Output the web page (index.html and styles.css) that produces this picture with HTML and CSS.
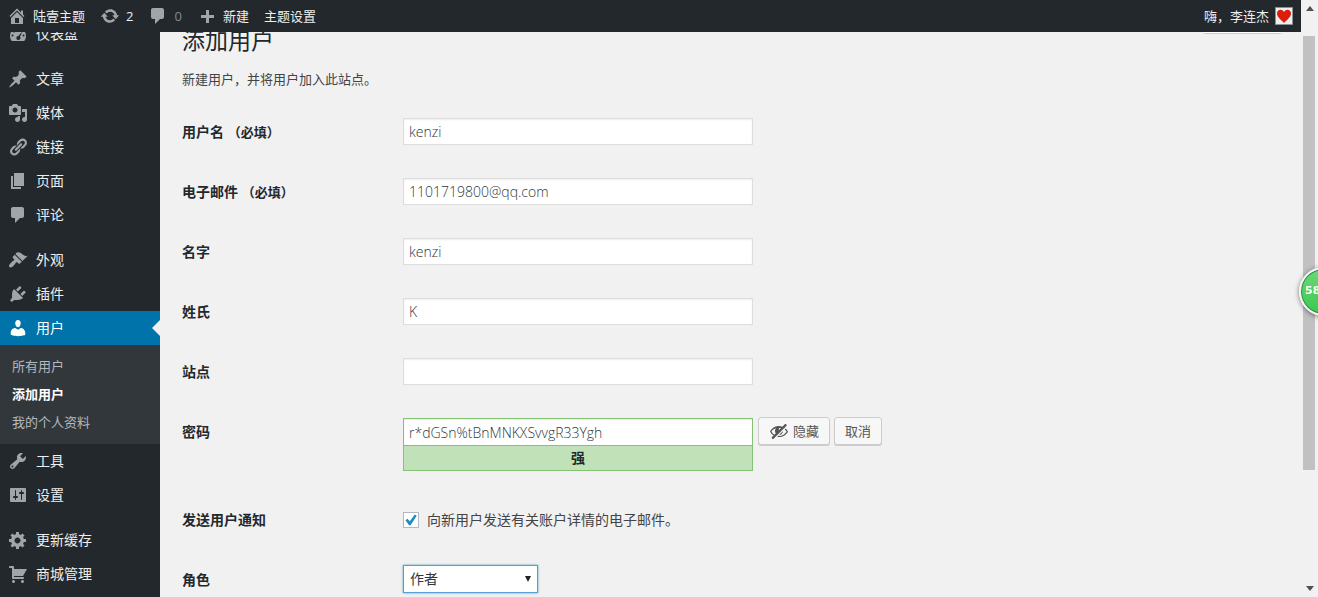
FILE: index.html
```html
<!DOCTYPE html>
<html lang="zh-CN">
<head>
<meta charset="utf-8">
<meta name="viewport" content="width=device-width, initial-scale=1">
<title>添加用户</title>
<link rel="stylesheet" href="styles.css">
</head>
<body>
<div class="app">
  <header class="adminbar">
    <a class="bar-item" href="#"><svg class="icon" viewBox="0 0 20 20"><path d="M16 8.5l1.53 1.53-1.06 1.06L10 4.6l-6.47 6.49-1.06-1.06L10 2.5l4 4v-2h2v4zm-6-2.46l6 5.99V18H4v-5.97zM12 17v-5H8v5h4z"/></svg>陆壹主题</a>
    <a class="bar-item" href="#"><svg class="icon" viewBox="0 0 20 20"><path d="M10.2 3.28c3.53 0 6.43 2.61 6.92 6h2.08l-3.5 4-3.5-4h2.32c-.45-1.97-2.21-3.45-4.32-3.45-1.45 0-2.73.71-3.54 1.78L4.95 5.66C6.23 4.2 8.11 3.28 10.2 3.28zm-.4 13.44c-3.52 0-6.43-2.61-6.92-6H.8l3.5-4c1.17 1.33 2.33 2.67 3.5 4H5.48c.45 1.97 2.21 3.45 4.32 3.45 1.45 0 2.73-.71 3.54-1.78l1.71 1.95c-1.28 1.46-3.15 2.38-5.25 2.38z"/></svg>2</a>
    <a class="bar-item bar-item-muted" href="#"><svg class="icon" viewBox="0 0 20 20"><path d="M5 2h9c1.1 0 2 .9 2 2v7c0 1.1-.9 2-2 2h-2l-5 5v-5H5c-1.1 0-2-.9-2-2V4c0-1.1.9-2 2-2z"/></svg>0</a>
    <a class="bar-item" href="#"><svg class="icon" viewBox="0 0 20 20"><path d="M17 9v3h-5v5H9v-5H4V9h5V4h3v5h5z"/></svg>新建</a>
    <a class="bar-item" href="#">主题设置</a>
    <a class="bar-item bar-account" href="#">嗨，李连杰
      <svg class="avatar" viewBox="0 0 18 18"><path fill="#eee" stroke="#8c8f94" d="M.5.5h17v17H.5z"/><path fill="#dc1c0c" d="M9 16C7 13.500 2 10.500 2 6.500 2 2.500 7 1.500 9 5c2-3.500 7-2.500 7 1.500C16 10.500 11 13.500 9 16z"/></svg>
    </a>
  </header>
  <div class="body">
    <nav class="sidebar" aria-label="主菜单">
      <ul class="menu">
        <li><a class="menu-link" href="#"><svg class="icon" viewBox="0 0 20 20"><path fill-rule="evenodd" d="M3.760 17h12.480A8 8 0 1 0 3.760 17zM10 5a1 1 0 1 1 0 2 1 1 0 0 1 0-2zM6 6.500a1 1 0 1 1 0 2 1 1 0 0 1 0-2zM14.500 7.500l-2.500 5.200a2 2 0 1 1-1.700-.8zM4.500 10.500a1 1 0 1 1 0 2 1 1 0 0 1 0-2zM15.500 10.500a1 1 0 1 1 0 2 1 1 0 0 1 0-2z"/></svg>仪表盘</a></li>
      </ul>
      <ul class="menu">
        <li><a class="menu-link" href="#"><svg class="icon" viewBox="0 0 20 20"><path d="M10.440 3.020l1.820-1.820 6.360 6.350-1.830 1.820c-1.050-.68-2.480-.57-3.410.36l-.75.75c-.92.93-1.040 2.350-.35 3.410l-1.830 1.820-2.410-2.410-2.800 2.790c-.42.42-3.380 2.710-3.800 2.290s1.860-3.390 2.280-3.810l2.790-2.790L4.100 9.360l1.830-1.820c1.050.69 2.480.57 3.400-.36l.75-.75c.93-.92 1.050-2.350.36-3.410z"/></svg>文章</a></li>
        <li><a class="menu-link" href="#"><svg class="icon" viewBox="0 0 20 20"><path d="M13 11V4c0-.55-.45-1-1-1h-1.670L9 1H5L3.670 3H2c-.55 0-1 .45-1 1v7c0 .55.45 1 1 1h10c.55 0 1-.45 1-1zM7 4.500c1.380 0 2.500 1.120 2.500 2.500S8.380 9.500 7 9.500 4.500 8.380 4.500 7 5.620 4.500 7 4.500zM14 6h5v10.500c0 1.380-1.120 2.500-2.500 2.500S14 17.880 14 16.500s1.120-2.500 2.500-2.500c.17 0 .34.02.5.05V9h-3V6zm-4 8.050V13h2v3.500c0 1.380-1.120 2.500-2.500 2.500S7 17.880 7 16.500 8.120 14 9.500 14c.17 0 .34.02.5.05z"/></svg>媒体</a></li>
        <li><a class="menu-link" href="#"><svg class="icon" viewBox="0 0 20 20"><path d="M17.740 2.760c1.680 1.690 1.680 4.410 0 6.100l-1.530 1.520c-1.120 1.120-2.700 1.470-4.140 1.090l2.620-2.610.76-.77.76-.76c.84-.84.84-2.200 0-3.040-.84-.85-2.200-.85-3.040 0l-.77.76-3.380 3.380c-.37-1.440-.02-3.020 1.100-4.140l1.520-1.530c1.690-1.680 4.420-1.680 6.100 0zM8.590 13.430l5.340-5.340c.42-.42.42-1.100 0-1.520-.44-.43-1.130-.39-1.530 0l-5.330 5.340c-.42.42-.42 1.100 0 1.520.44.43 1.130.39 1.520 0zm-.76 2.290l4.140-4.150c.38 1.440.03 3.020-1.090 4.140l-1.520 1.530c-1.690 1.680-4.410 1.680-6.100 0-1.680-1.680-1.680-4.420 0-6.100l1.530-1.520c1.120-1.120 2.700-1.470 4.140-1.100l-4.140 4.150c-.85.84-.85 2.200 0 3.050.84.84 2.200.84 3.040 0z"/></svg>链接</a></li>
        <li><a class="menu-link" href="#"><svg class="icon" viewBox="0 0 20 20"><path d="M6 15V2h10v13H6zm-1 1h8v2H3V5h2v11z"/></svg>页面</a></li>
        <li><a class="menu-link" href="#"><svg class="icon" viewBox="0 0 20 20"><path d="M5 2h9c1.100 0 2 .9 2 2v7c0 1.100-.9 2-2 2h-2l-5 5v-5H5c-1.100 0-2-.9-2-2V4c0-1.100.9-2 2-2z"/></svg>评论</a></li>
      </ul>
      <ul class="menu">
        <li><a class="menu-link" href="#"><svg class="icon" viewBox="0 0 20 20"><path d="M14.480 11.060L7.410 3.990l1.500-1.500c.5-.56 2.300-.47 3.510.32 1.210.8 1.430 1.280 2.910 2.100 1.180.64 2.450 1.260 4.450.85zm-.71.71L6.700 4.700 4.930 6.470c-.39.39-.39 1.020 0 1.410l1.060 1.060c.39.39.39 1.030 0 1.420-.6.6-1.430 1.110-2.210 1.690-.35.26-.7.53-1.010.84C1.430 14.230.4 16.080 1.400 17.070c.99 1 2.840-.03 4.180-1.360.31-.31.58-.66.85-1.020.57-.78 1.080-1.610 1.690-2.210.39-.39 1.020-.39 1.410 0l1.060 1.060c.39.39 1.020.39 1.410 0z"/></svg>外观</a></li>
        <li><a class="menu-link" href="#"><svg class="icon" viewBox="0 0 20 20"><path d="M13.110 4.360L9.870 7.600 8 5.730l3.240-3.240c.35-.34 1.050-.2 1.560.32.52.51.66 1.210.31 1.550zm-8 1.770l.91-1.120 9.010 9.010-1.190.84c-.71.71-2.630 1.160-3.820 1.160H6.140L4.900 17.260c-.59.59-1.540.59-2.120 0-.59-.58-.59-1.530 0-2.120l1.240-1.240v-3.880c0-1.130.4-3.190 1.090-3.890zm7.260 3.970l3.240-3.240c.34-.35 1.040-.21 1.550.31.52.51.66 1.210.31 1.550l-3.240 3.250z"/></svg>插件</a></li>
        <li>
          <a class="menu-link menu-link-current" href="#"><svg class="icon" viewBox="0 0 20 20"><path d="M10 9.250c-2.270 0-2.730-3.440-2.730-3.440C7 4.020 7.820 2 9.970 2c2.160 0 2.980 2.020 2.710 3.810 0 0-.41 3.440-2.680 3.440zm0 2.570L12.720 10c2.390 0 4.520 2.330 4.520 4.530v2.490s-3.650 1.130-7.240 1.130c-3.650 0-7.240-1.130-7.240-1.130v-2.490c0-2.250 1.940-4.480 4.470-4.480z"/></svg>用户</a>
          <ul class="submenu">
            <li><a class="submenu-link" href="#">所有用户</a></li>
            <li><a class="submenu-link submenu-link-current" href="#">添加用户</a></li>
            <li><a class="submenu-link" href="#">我的个人资料</a></li>
          </ul>
        </li>
        <li><a class="menu-link" href="#"><svg class="icon" viewBox="0 0 20 20"><path d="M16.680 9.770c-1.340 1.340-3.300 1.670-4.950.99l-5.410 6.520c-.99.99-2.590.99-3.580 0s-.99-2.590 0-3.570l6.520-5.420c-.68-1.650-.35-3.610.99-4.950 1.280-1.280 3.120-1.620 4.720-1.060l-2.890 2.890 2.820 2.820 2.860-2.870c.53 1.580.18 3.390-1.080 4.650zM3.810 16.210c.4.39 1.040.39 1.430 0 .4-.4.4-1.040 0-1.430-.39-.4-1.030-.4-1.430 0-.39.39-.39 1.030 0 1.430z"/></svg>工具</a></li>
        <li><a class="menu-link" href="#"><svg class="icon" viewBox="0 0 20 20"><path d="M18 16V4c0-.55-.45-1-1-1H3c-.55 0-1 .45-1 1v12c0 .55.45 1 1 1h14c.55 0 1-.45 1-1zM8 11h1c.55 0 1 .45 1 1s-.45 1-1 1H8v1.500c0 .28-.22.5-.5.5s-.5-.22-.5-.5V13H6c-.55 0-1-.45-1-1s.45-1 1-1h1V5.500c0-.28.22-.5.5-.5s.5.22.5.5V11zm5-2h-1c-.55 0-1-.45-1-1s.45-1 1-1h1V5.500c0-.28.22-.5.5-.5s.5.22.5.5V7h1c.55 0 1 .45 1 1s-.45 1-1 1h-1v5.500c0 .28-.22.5-.5.5s-.5-.22-.5-.5V9z"/></svg>设置</a></li>
      </ul>
      <ul class="menu">
        <li><a class="menu-link" href="#"><svg class="icon" viewBox="0 0 20 20"><path d="M18 12h-2.180c-.17.7-.44 1.350-.81 1.930l1.540 1.540-2.100 2.100-1.540-1.540c-.58.36-1.230.63-1.910.79V19H8v-2.180c-.68-.16-1.330-.43-1.910-.79l-1.540 1.540-2.120-2.120 1.540-1.540c-.36-.58-.63-1.230-.79-1.910H1V9.030h2.170c.16-.7.44-1.350.8-1.940L2.430 5.550l2.100-2.100 1.540 1.540c.58-.37 1.240-.64 1.930-.81V2h3v2.180c.68.16 1.330.43 1.910.79l1.540-1.540 2.120 2.120-1.540 1.540c.36.59.64 1.240.8 1.940H18V12zm-8.500 1.500c1.660 0 3-1.340 3-3s-1.340-3-3-3-3 1.340-3 3 1.340 3 3 3z"/></svg>更新缓存</a></li>
        <li><a class="menu-link" href="#"><svg class="icon" viewBox="0 0 20 20"><path d="M6 13h9c.55 0 1 .45 1 1s-.45 1-1 1H5c-.55 0-1-.45-1-1V4H2c-.55 0-1-.45-1-1s.45-1 1-1h3c.55 0 1 .45 1 1v2h13l-4 7H6v1zm-.5 3c.83 0 1.500.67 1.500 1.500S6.330 19 5.500 19 4 18.330 4 17.500 4.670 16 5.500 16zm9 0c.83 0 1.500.67 1.500 1.500s-.67 1.500-1.500 1.500-1.500-.67-1.500-1.500.67-1.500 1.500-1.500z"/></svg>商城管理</a></li>
      </ul>
    </nav>
    <main class="content">
      <div class="help-tab"></div>
      <h1 class="title">添加用户</h1>
      <p class="intro">新建用户，并将用户加入此站点。</p>
      <form class="form">
        <div class="row"><label class="label" for="login">用户名 <span class="required">（必填）</span></label><div class="field"><input class="text" id="login" type="text" value="kenzi"></div></div>
        <div class="row"><label class="label" for="email">电子邮件 <span class="required">（必填）</span></label><div class="field"><input class="text" id="email" type="text" value="1101719800@qq.com"></div></div>
        <div class="row"><label class="label" for="first">名字</label><div class="field"><input class="text" id="first" type="text" value="kenzi"></div></div>
        <div class="row"><label class="label" for="last">姓氏</label><div class="field"><input class="text" id="last" type="text" value="K"></div></div>
        <div class="row"><label class="label" for="url">站点</label><div class="field"><input class="text" id="url" type="text" value=""></div></div>
        <div class="row row-password"><label class="label" for="pass">密码</label>
          <div class="field">
            <div class="password"><input class="text text-strong" id="pass" type="text" value="r*dGSn%tBnMNKXSvvgR33Ygh"><div class="strength">强</div></div>
            <div class="actions">
              <button class="button" type="button"><svg class="icon" viewBox="0 0 20 20"><path d="M17.200 3.300l.16.17c.39.39.39 1.020 0 1.410L4.550 17.700c-.39.39-1.030.39-1.410 0l-.17-.17c-.39-.39-.39-1.020 0-1.410l1.590-1.600c-1.570-1-2.760-2.300-3.560-3.930.81-1.650 2.030-2.980 3.640-3.990S8.040 5.090 10 5.090c1.200 0 2.330.21 3.400.6l2.380-2.390c.39-.39 1.030-.39 1.420 0zm-7.090 4.010c-.23.25-.34.54-.34.88 0 .31.12.58.31.81l1.800-1.790c-.13-.12-.28-.21-.45-.26-.11-.01-.28-.03-.49-.04-.33.03-.6.16-.83.4zM2.400 10.590c.69 1.230 1.710 2.250 3.050 3.050l1.280-1.280c-.51-.69-.77-1.470-.77-2.360 0-1.060.36-1.980 1.090-2.760-1.040.27-1.960.7-2.760 1.260-.8.58-1.430 1.270-1.890 2.090zm13.220-2.130l.96-.96c1.020.86 1.830 1.890 2.420 3.090-.81 1.650-2.030 2.980-3.640 3.990s-3.400 1.510-5.360 1.510c-.63 0-1.240-.07-1.830-.18l1.070-1.070c.25.02.5.05.76.05 1.630 0 3.130-.4 4.500-1.210s2.400-1.840 3.100-3.090c-.46-.82-1.090-1.510-1.890-2.090-.03-.01-.06-.03-.09-.04zm-5.580 5.580l4-4c-.01 1.100-.41 2.040-1.180 2.810-.78.78-1.720 1.180-2.820 1.190z"/></svg>隐藏</button>
              <button class="button" type="button">取消</button>
            </div>
          </div>
        </div>
        <div class="row"><span class="label">发送用户通知</span><div class="field field-check"><input class="check" id="notify" type="checkbox" checked><label for="notify">向新用户发送有关账户详情的电子邮件。</label></div></div>
        <div class="row"><label class="label" for="role">角色</label><div class="field field-select"><div class="select-wrap"><select class="select" id="role"><option>作者</option></select></div></div></div>
      </form>
    </main>
  </div>
</div>
<div class="scrollbar">
  <svg class="scroll-arrow" viewBox="0 0 17 17"><path d="M5 11h8L9 6z"/></svg>
  <div class="thumb"></div>
  <svg class="scroll-arrow" viewBox="0 0 17 17"><path d="M5 6h8l-4 5z"/></svg>
</div>
<div class="bubble">58</div>
</body>
</html>
```
FILE: styles.css
```css
* { box-sizing: border-box; }

body {
  margin: 0;
  height: 100vh;
  display: flex;
  overflow: hidden;
  background: #f1f1f1;
  color: #444;
  font: 13px/20px "Open Sans", "Noto Sans CJK SC", sans-serif;
}

ul { list-style: none; margin: 0; padding: 0; }
a { color: inherit; text-decoration: none; }
input, select, button { font: inherit; color: inherit; }

.icon { width: 20px; height: 20px; flex: none; fill: #a0a5aa; }

.app { flex: 1; min-width: 0; display: flex; flex-direction: column; }

.adminbar {
  flex: none;
  height: 32px;
  padding: 0 8px 0 7px;
  display: flex;
  gap: 15px;
  background: #23282d;
  color: #eee;
}
.bar-item { display: flex; align-items: center; gap: 6px; }
.bar-item-muted { color: #84888c; }
.bar-account { margin-left: auto; }
.avatar { width: 18px; height: 18px; }

.body { flex: 1; min-height: 0; display: flex; overflow: hidden; }

/* The page is shown slightly scrolled: the columns start above the bar's edge. */
.sidebar { flex: none; width: 160px; background: #23282d; color: #eee; overflow: hidden; }
.menu { margin-bottom: 11px; }
.menu:first-child { margin-top: -15px; }
.menu-link {
  height: 34px;
  padding-left: 8px;
  display: flex;
  align-items: center;
  gap: 8px;
  font-size: 14px;
}
.menu-link-current { position: relative; background: #0073aa; color: #fff; }
.menu-link-current .icon { fill: #fff; }
.menu-link-current::after {
  content: "";
  position: absolute;
  right: 0;
  top: 9px;
  border: 8px solid transparent;
  border-left: 0;
  border-right-color: #f1f1f1;
}
.submenu { padding: 7px 0 8px; background: #32373c; color: #b4b9be; }
.submenu-link { display: block; padding: 4px 12px; }
.submenu-link-current { color: #fff; font-weight: 600; }

.content { flex: 1; min-width: 0; position: relative; padding-left: 22px; overflow: hidden; }
.help-tab {
  position: absolute;
  top: 0;
  right: 20px;
  width: 77px;
  height: 2px;
  background: #fff;
  border-bottom: 1px solid #ccc;
}
.title { margin: -7px 0 0; font-size: 23px; line-height: 30px; font-weight: 400; color: #23282d; }
.intro { margin: 14px 0 13px; }

.row { display: grid; grid-template-columns: 221px 1fr; min-height: 60px; }
.row-password { min-height: 88px; }
.label { padding: 20px 0; font-size: 14px; font-weight: 600; color: #23282d; }
.required { font-size: 13px; }
.field { display: flex; align-items: flex-start; gap: 5px; padding: 16px 10px 0 0; font-size: 14px; }
.text {
  display: block;
  width: 350px;
  max-width: 100%;
  height: 27px;
  padding: 3px 5px;
  border: 1px solid #ddd;
  background: #fff;
  color: #32373c;
  font-weight: 300;
  box-shadow: inset 0 1px 2px rgba(0, 0, 0, .07);
}
.text-strong { height: 28px; border-color: #83c373; }
.strength {
  height: 25px;
  border: 1px solid #83c373;
  border-top: 0;
  background: #c1e1b9;
  color: #23282d;
  line-height: 24px;
  font-weight: 600;
  text-align: center;
}
.actions { display: flex; gap: 4px; margin-top: -1px; }
.button {
  height: 28px;
  padding: 0 10px;
  display: flex;
  align-items: center;
  gap: 4px;
  border: 1px solid #ccc;
  border-radius: 3px;
  background: #f7f7f7;
  box-shadow: 0 1px 0 #ccc;
  color: #555;
  font-size: 13px;
}
.button .icon { fill: #555; }

.field-check { align-items: center; gap: 8px; padding-top: 0; }
.check {
  appearance: none;
  width: 16px;
  height: 16px;
  margin: 0;
  border: 1px solid #b4b9be;
  background: #fff;
  display: grid;
  place-items: center;
}
.check:checked::before {
  content: "";
  width: 12px;
  height: 12px;
  background: #1e8cbe;
  clip-path: polygon(4% 52%, 20% 40%, 40% 60%, 82% 4%, 98% 14%, 46% 94%, 34% 94%);
}

.field-select { padding-top: 15px; }
.select-wrap { position: relative; }
.select {
  appearance: none;
  width: 135px;
  height: 28px;
  padding: 2px 24px 2px 6px;
  border: 1px solid #5b9dd9;
  border-radius: 0;
  background: #fff;
  box-shadow: 0 0 2px rgba(30, 140, 190, .8);
  color: #32373c;
}
.select-wrap::after {
  content: "";
  position: absolute;
  right: 7px;
  top: 11px;
  border: 3px solid transparent;
  border-top: 6px solid #222;
  border-bottom: 0;
  pointer-events: none;
}

.scrollbar { flex: none; width: 17px; display: flex; flex-direction: column; background: #f1f1f1; }
.scroll-arrow { width: 17px; height: 17px; flex: none; fill: #505050; }
.thumb { flex: 1; margin: 19px 3px 110px 2px; background: #c1c1c1; }

.bubble {
  position: fixed;
  right: -30px;
  top: 267px;
  width: 49px;
  height: 49px;
  padding-left: 4px;
  border: 2px solid #f4f4f4;
  border-radius: 50%;
  background: linear-gradient(#6bd877, #3cc850);
  box-shadow: 0 1px 5px rgba(0, 0, 0, .5), inset 0 0 0 1px #2d8a4b;
  color: #fff;
  font: bold 11px/43px "DejaVu Sans", sans-serif;
}
```
